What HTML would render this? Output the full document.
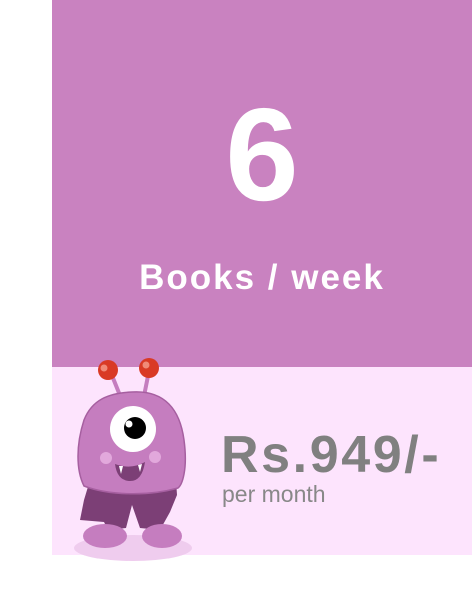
<!DOCTYPE html>
<html><head><meta charset="utf-8"><style>
html,body{margin:0;padding:0;background:#fff;width:472px;height:595px;overflow:hidden;position:relative;font-family:"Liberation Sans",sans-serif}
.top{position:absolute;left:52px;top:0;width:420px;height:367px;background:#c982c0}
.bot{position:absolute;left:52px;top:367px;width:420px;height:188px;background:#fde4fd}
.six{position:absolute;left:52px;width:420px;top:80px;text-align:center;color:#fff;font-weight:bold;font-size:132px;line-height:150px}
.bk{position:absolute;left:52px;width:420px;top:258px;text-align:center;color:#fff;font-weight:bold;font-size:35px;letter-spacing:2px;line-height:40px}
.pr{position:absolute;left:221px;top:425px;color:#808080;font-weight:bold;font-size:52px;letter-spacing:2.6px;line-height:60px}
.pm{position:absolute;left:222px;top:480px;color:#888;font-size:23px;line-height:28px}
svg{position:absolute;left:0;top:0}
</style></head><body>
<div class="top"></div><div class="bot"></div>
<div class="six">6</div>
<div class="bk">Books / week</div>
<div class="pr">Rs.949/-</div>
<div class="pm">per month</div>
<svg width="472" height="595" viewBox="0 0 472 595">
<ellipse cx="133" cy="548" rx="59" ry="13" fill="#efccee"/>
<path d="M113 378 L121 398" stroke="#c57dbf" stroke-width="4"/>
<path d="M148 376 L144 396" stroke="#c57dbf" stroke-width="4"/>
<circle cx="108" cy="370" r="10" fill="#d93a25"/><circle cx="104" cy="368" r="3.5" fill="#f08a78"/>
<circle cx="149" cy="368" r="10" fill="#d93a25"/><circle cx="146" cy="365" r="3.5" fill="#f08a78"/>
<path d="M84 500 L80 520 L104 522 L108 530 L126 528 L132 505 L140 528 L160 530 L170 512 L177 495 L176 480 L90 480Z" fill="#7c3f76"/>
<ellipse cx="105" cy="536" rx="22" ry="12" fill="#c57dbf"/>
<ellipse cx="162" cy="536" rx="20" ry="12" fill="#c57dbf"/>
<path d="M132 392 C165 390 180 410 184 440 C188 470 182 485 178 488 C150 496 110 496 84 486 C76 470 76 445 84 420 C92 400 108 393 132 392Z" fill="#c57dbf" stroke="#a65fa0" stroke-width="1.5"/>
<circle cx="133" cy="429" r="23" fill="#fff"/>
<circle cx="135" cy="428" r="11" fill="#000"/>
<circle cx="129" cy="424" r="3.5" fill="#fff"/>
<circle cx="106" cy="458" r="6" fill="#e2a8dc"/><circle cx="155" cy="457" r="6" fill="#e2a8dc"/>
<path d="M115 464 Q131 470 145 462 Q142 482 129 481 Q117 480 115 464Z" fill="#7c3f76"/>
<path d="M119 466 L123 466 L121 474Z M138 465 L142 464 L140 472Z" fill="#fff"/>
</svg>
</body></html>
